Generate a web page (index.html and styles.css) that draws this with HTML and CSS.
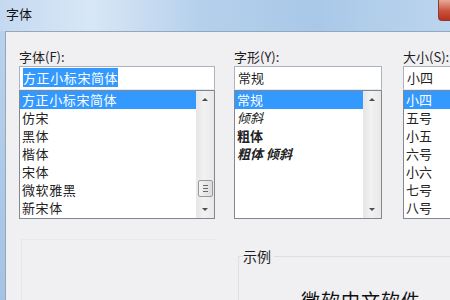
FILE: index.html
```html
<!DOCTYPE html>
<html lang="zh-CN">
<head>
  <meta charset="UTF-8" />
  <meta name="viewport" content="width=device-width, initial-scale=1.0"/>
  <title>字体</title>
  <link rel="stylesheet" href="styles.css">
</head>
<body>
  <div class="window">
    <div class="titlebar">
      <span class="title">字体</span>
      <div class="close"></div>
    </div>

    <div class="frame">
      <div class="panel">
        <div class="pickers">
          <div class="picker font-picker">
            <div class="label">字体(F):</div>
            <div class="textbox"><span class="selected-text">方正小标宋简体</span></div>
            <div class="list">
              <ul class="items spaced">
                <li class="active">方正小标宋简体</li>
                <li>仿宋</li>
                <li>黑体</li>
                <li>楷体</li>
                <li>宋体</li>
                <li>微软雅黑</li>
                <li>新宋体</li>
              </ul>
              <div class="scrollbar">
                <span class="arrow up"></span>
                <span class="thumb"><i></i><i></i><i></i></span>
                <span class="arrow down"></span>
              </div>
            </div>
          </div>

          <div class="picker style-picker">
            <div class="label">字形(Y):</div>
            <div class="textbox">常规</div>
            <div class="list">
              <ul class="items">
                <li class="active">常规</li>
                <li class="italic">倾斜</li>
                <li class="bold">粗体</li>
                <li class="bold italic">粗体 倾斜</li>
              </ul>
              <div class="scrollbar">
                <span class="arrow up"></span>
                <span class="track"></span>
                <span class="arrow down"></span>
              </div>
            </div>
          </div>

          <div class="picker size-picker">
            <div class="label">大小(S):</div>
            <div class="textbox">小四</div>
            <div class="list">
              <ul class="items">
                <li class="active">小四</li>
                <li>五号</li>
                <li>小五</li>
                <li>六号</li>
                <li>小六</li>
                <li>七号</li>
                <li>八号</li>
              </ul>
            </div>
          </div>
        </div>

        <div class="lower">
          <div class="effects"></div>
          <div class="sample">
            <span class="sample-label">示例</span>
            <div class="sample-text">微软中文软件</div>
          </div>
        </div>
      </div>
    </div>
  </div>
</body>
</html>
```

FILE: styles.css
```css
body {
  margin: 0;
  width: 450px;
  height: 300px;
  overflow: hidden;
  font-family: "Noto Sans CJK SC", "Noto Sans", sans-serif;
  font-size: 13px;
  color: #1e1e1e;
  background: #f0eff2;
}

.window {
  height: 300px;
  display: flex;
  flex-direction: column;
  background: #b9d1ec;
}

.titlebar {
  position: relative;
  height: 31px;
  flex-shrink: 0;
  background: linear-gradient(to right, #c4d9f0 0%, #d8e7f6 20%, #b5d0ec 45%, #a9c8e8 70%, #bcd5ee 100%);
}

.title {
  display: block;
  padding: 4px 0 0 6px;
  font-size: 13px;
  color: #111;
}

.close {
  position: absolute;
  right: -12px;
  top: 0;
  width: 22px;
  height: 20px;
  border: 1px solid #8a3a2e;
  border-top: none;
  border-radius: 0 0 0 4px;
  background: linear-gradient(to bottom, #e9a99a, #c9533c 55%, #b8311c);
}

.frame {
  flex: 1;
  min-height: 0;
  display: flex;
  padding-left: 5px;
  background: linear-gradient(to bottom, #b9d1ec, #a5c3e4);
}

.panel {
  flex: 1;
  overflow: hidden;
  border-left: 1px solid #93a7bd;
  border-top: 1px solid #93a7bd;
  background: #f0eff2;
  padding: 16px 0 0 13px;
}

.pickers {
  display: flex;
}

.picker {
  flex-shrink: 0;
  display: flex;
  flex-direction: column;
}

.font-picker {
  width: 196px;
  margin-right: 19px;
}

.style-picker {
  width: 148px;
  margin-right: 21px;
}

.size-picker {
  width: 60px;
}

.label {
  height: 17px;
  line-height: 17px;
  font-size: 13px;
}

.textbox {
  box-sizing: border-box;
  height: 24px;
  margin-top: 1px;
  padding: 2px 3px 0;
  line-height: 18px;
  border: 1px solid #abb3be;
  border-bottom-color: #e3e9ef;
  background: #fff;
  font-size: 13px;
  white-space: nowrap;
}

.selected-text {
  background: #3399ff;
  color: #fff;
  letter-spacing: 0.6px;
}

.list {
  box-sizing: border-box;
  height: 129px;
  display: flex;
  border: 1px solid #828790;
  background: #fff;
}

.items {
  flex: 1;
  list-style: none;
  margin: 0;
  padding: 0;
}

.items li {
  height: 18px;
  line-height: 18px;
  padding-left: 2px;
  font-size: 13px;
  color: #222;
  white-space: nowrap;
}

.items.spaced li {
  letter-spacing: 0.6px;
}

.items li.active {
  background: #3399ff;
  color: #fff;
}

.items li.bold {
  font-weight: 700;
}

.items li.italic {
  font-style: italic;
}

.scrollbar {
  width: 17px;
  display: flex;
  flex-direction: column;
  background: linear-gradient(to right, #e6e6e6, #f2f2f2 40%, #e8e8e8);
  border-left: 1px solid #e8e8e8;
}

.arrow {
  height: 17px;
  flex-shrink: 0;
  position: relative;
}

.arrow::after {
  content: "";
  position: absolute;
  left: 5px;
  width: 0;
  height: 0;
  border-left: 3px solid transparent;
  border-right: 3px solid transparent;
}

.arrow.up::after {
  top: 7px;
  border-bottom: 3px solid #4d4d4d;
}

.arrow.down::after {
  top: 7px;
  border-top: 3px solid #4d4d4d;
}

.scrollbar .track {
  flex: 1;
}

.scrollbar .arrow.up {
  margin-bottom: auto;
}

.thumb {
  height: 17px;
  margin: 0 1px 4px;
  box-sizing: border-box;
  border: 1px solid #9a9a9a;
  border-radius: 2px;
  background: linear-gradient(to right, #f4f4f4, #dcdcdc);
  display: flex;
  flex-direction: column;
  justify-content: center;
  gap: 2px;
  padding: 0 4px;
}

.thumb i {
  height: 1px;
  background: #6a6a6a;
}

.lower {
  display: flex;
  margin-top: 19px;
}

.effects {
  flex-shrink: 0;
  width: 195px;
  margin: 1px 21px 0 2px;
  height: 60px;
  border-left: 1px solid #e6e6ea;
  border-top: 1px solid #e9e9ec;
}

.sample {
  position: relative;
  flex: 1;
  margin-top: 18px;
  border-left: 1px solid #dcdfe4;
  border-top: 1px solid #dcdfe4;
  height: 43px;
}

.sample-label {
  position: absolute;
  left: 4px;
  top: -9px;
  padding-right: 3px;
  background: #f0eff2;
  font-size: 14px;
  line-height: 17px;
}

.sample-text {
  margin: 31px 0 0 62px;
  font-size: 19px;
  line-height: 24px;
  letter-spacing: 1px;
  color: #111;
  white-space: nowrap;
}
```
